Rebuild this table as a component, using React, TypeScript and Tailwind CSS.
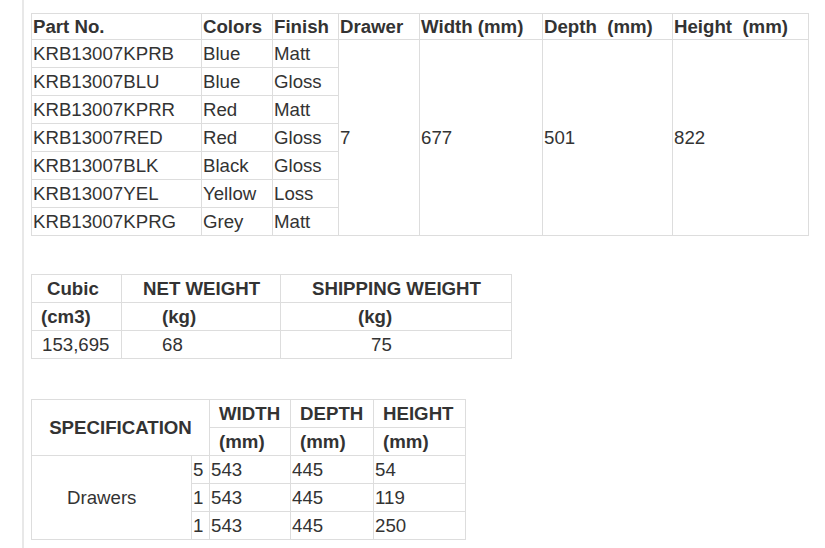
import React from "react";

const base = "border border-[#dddddd] px-[1px] align-middle whitespace-nowrap";
const cell = `${base} text-left font-normal`;
const hcell = `${base} text-left font-bold`;

const parts = [
  ["KRB13007KPRB", "Blue", "Matt"],
  ["KRB13007BLU", "Blue", "Gloss"],
  ["KRB13007KPRR", "Red", "Matt"],
  ["KRB13007RED", "Red", "Gloss"],
  ["KRB13007BLK", "Black", "Gloss"],
  ["KRB13007YEL", "Yellow", "Loss"],
  ["KRB13007KPRG", "Grey", "Matt"],
];

export default function App() {
  return (
    <div
      className="min-h-[548px] w-[825px] bg-white text-[#333333] text-[18.67px] leading-[21px]"
      style={{ fontFamily: '"Liberation Sans", Arial, sans-serif' }}
    >
      <div className="ml-[22px] min-h-[548px] border-l-2 border-[#e8e8e8] pl-[7px] pt-[13px]">
        <table className="table-fixed border-collapse w-[777px]">
          <colgroup>
            <col className="w-[170px]" />
            <col className="w-[71px]" />
            <col className="w-[66px]" />
            <col className="w-[81px]" />
            <col className="w-[123px]" />
            <col className="w-[130px]" />
            <col className="w-[136px]" />
          </colgroup>
          <tbody>
            <tr className="h-[26px]">
              <th className={hcell}>Part No.</th>
              <th className={hcell}>Colors</th>
              <th className={hcell}>Finish</th>
              <th className={hcell}>Drawer</th>
              <th className={hcell}>Width (mm)</th>
              <th className={hcell}>Depth&nbsp; (mm)</th>
              <th className={hcell}>Height&nbsp; (mm)</th>
            </tr>
            {parts.map((p, i) => (
              <tr key={p[0]} className="h-[28px]">
                <td className={cell}>{p[0]}</td>
                <td className={cell}>{p[1]}</td>
                <td className={cell}>{p[2]}</td>
                {i === 0 && (
                  <>
                    <td rowSpan={7} className={cell}>7</td>
                    <td rowSpan={7} className={cell}>677</td>
                    <td rowSpan={7} className={cell}>501</td>
                    <td rowSpan={7} className={cell}>822</td>
                  </>
                )}
              </tr>
            ))}
          </tbody>
        </table>

        <table className="table-fixed border-collapse w-[480px] mt-[38px]">
          <colgroup>
            <col className="w-[90px]" />
            <col className="w-[159px]" />
            <col className="w-[231px]" />
          </colgroup>
          <tbody>
            <tr className="h-[28px]">
              <th className={`${hcell} pl-[15px]`}>Cubic</th>
              <th className={`${hcell} pl-[21px]`}>NET WEIGHT</th>
              <th className={`${hcell} pl-[31px]`}>SHIPPING WEIGHT</th>
            </tr>
            <tr className="h-[28px]">
              <th className={`${hcell} pl-[9px]`}>(cm3)</th>
              <th className={`${hcell} pl-[40px]`}>(kg)</th>
              <th className={`${hcell} pl-[77px]`}>(kg)</th>
            </tr>
            <tr className="h-[28px]">
              <td className={`${cell} pl-[10px]`}>153,695</td>
              <td className={`${cell} pl-[40px]`}>68</td>
              <td className={`${cell} pl-[90px]`}>75</td>
            </tr>
          </tbody>
        </table>

        <table className="table-fixed border-collapse w-[434px] mt-[40px]">
          <colgroup>
            <col className="w-[160px]" />
            <col className="w-[18px]" />
            <col className="w-[81px]" />
            <col className="w-[83px]" />
            <col className="w-[92px]" />
          </colgroup>
          <tbody>
            <tr className="h-[28px]">
              <th rowSpan={2} colSpan={2} className={`${base} text-center font-bold`}>
                SPECIFICATION
              </th>
              <th className={`${hcell} pl-[9px]`}>WIDTH</th>
              <th className={`${hcell} pl-[9px]`}>DEPTH</th>
              <th className={`${hcell} pl-[9px]`}>HEIGHT</th>
            </tr>
            <tr className="h-[28px]">
              <th className={`${hcell} pl-[9px]`}>(mm)</th>
              <th className={`${hcell} pl-[9px]`}>(mm)</th>
              <th className={`${hcell} pl-[9px]`}>(mm)</th>
            </tr>
            <tr className="h-[28px]">
              <td rowSpan={3} className={`${cell} pl-[35px]`}>Drawers</td>
              <td className={cell}>5</td>
              <td className={cell}>543</td>
              <td className={cell}>445</td>
              <td className={cell}>54</td>
            </tr>
            <tr className="h-[28px]">
              <td className={cell}>1</td>
              <td className={cell}>543</td>
              <td className={cell}>445</td>
              <td className={cell}>119</td>
            </tr>
            <tr className="h-[28px]">
              <td className={cell}>1</td>
              <td className={cell}>543</td>
              <td className={cell}>445</td>
              <td className={cell}>250</td>
            </tr>
          </tbody>
        </table>
      </div>
    </div>
  );
}
